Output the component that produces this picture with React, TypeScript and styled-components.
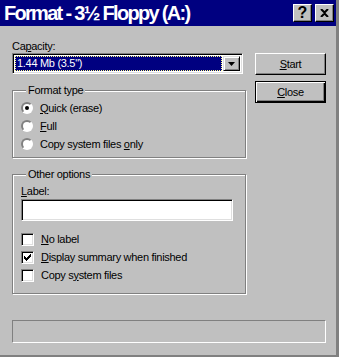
import styled, { createGlobalStyle } from 'styled-components';

const GlobalStyle = createGlobalStyle`
    html, body {
        margin: 0;
        padding: 0;
        background: #c0c0c0;
    }
    * {
        box-sizing: border-box;
    }
`

const Window = styled.div`
    width: 339px;
    height: 357px;
    display: flex;
    flex-direction: column;
    background: #c0c0c0;
    border-right: 3px solid #808080;
    border-bottom: 2px solid #808080;
    box-shadow: inset -1px -1px 0 #c0c0c0;
    font-family: "Liberation Sans", Arial, sans-serif;
    font-size: 11px;
    letter-spacing: -0.3px;
    color: #000;
`

const TitleBar = styled.div`
    height: 26px;
    background: #000080;
    display: flex;
    align-items: center;
    justify-content: space-between;
    padding: 0 2px 0 4px;
`

const TitleText = styled.div`
    color: #fff;
    font-weight: bold;
    font-size: 20px;
    letter-spacing: -1.7px;
    white-space: nowrap;
`

const TitleButtons = styled.div`
    display: flex;
    gap: 3px;
`

const TitleButton = styled.div`
    width: 19px;
    height: 18px;
    background: #c0c0c0;
    border: 1px solid;
    border-color: #fff #000 #000 #fff;
    box-shadow: inset -1px -1px 0 #808080;
    display: flex;
    align-items: center;
    justify-content: center;
    font-weight: bold;
    font-size: 16px;
    letter-spacing: 0;
    line-height: 1;
`

const Body = styled.div`
    display: flex;
    padding: 14px 0 0 12px;
`

const LeftColumn = styled.div`
    width: 234px;
    display: flex;
    flex-direction: column;
`

const RightColumn = styled.div`
    display: flex;
    flex-direction: column;
    gap: 6px;
    margin-left: 9px;
    padding-top: 13px;
`

const FieldLabel = styled.div`
    line-height: 13px;
    height: 13px;
`

const Combo = styled.div`
    width: 231px;
    height: 21px;
    display: flex;
    background: #fff;
    border: 1px solid;
    border-color: #808080 #fff #fff #808080;
    box-shadow: inset 1px 1px 0 #000, inset -1px -1px 0 #dfdfdf;
    padding: 2px;
`

const ComboValue = styled.div`
    flex: 1;
    background: #000080;
    color: #fff;
    line-height: 13px;
    padding: 1px 2px;
    outline: 1px dotted #ffff80;
    outline-offset: -1px;
    margin-right: 1px;
`

const DropButton = styled.div`
    width: 17px;
    background: #c0c0c0;
    border: 1px solid;
    border-color: #dfdfdf #000 #000 #dfdfdf;
    box-shadow: inset 1px 1px 0 #fff, inset -1px -1px 0 #808080;
    display: flex;
    align-items: center;
    justify-content: center;
`

const Group = styled.fieldset<{ top: number; pt: number; pb: number }>`
    margin: ${p => p.top}px 0 0 0;
    padding: ${p => p.pt}px 8px ${p => p.pb}px 8px;
    border: 1px solid #808080;
    box-shadow: inset 1px 1px 0 #fff, 1px 1px 0 #fff;
    min-width: 0;
`

const Legend = styled.legend`
    padding: 0 2px;
    margin-left: 5px;
    line-height: 13px;
    background: #c0c0c0;
`

const OptionRow = styled.div`
    height: 18px;
    display: flex;
    align-items: center;
    gap: 7px;
    line-height: 13px;
`

const Radio = styled.div<{ checked?: boolean }>`
    width: 12px;
    height: 12px;
    border-radius: 50%;
    background: #fff;
    border: 2px solid;
    border-color: #808080 #fff #fff #808080;
    display: flex;
    align-items: center;
    justify-content: center;
    &::after {
        content: '';
        width: 4px;
        height: 4px;
        border-radius: 50%;
        background: ${p => (p.checked ? '#000' : 'transparent')};
    }
`

const Check = styled.div`
    width: 13px;
    height: 13px;
    background: #fff;
    border: 1px solid;
    border-color: #808080 #fff #fff #808080;
    box-shadow: inset 1px 1px 0 #000, inset -1px -1px 0 #dfdfdf;
    display: flex;
    align-items: center;
    justify-content: center;
`

const TextInput = styled.div`
    width: 212px;
    height: 22px;
    margin-top: 1px;
    background: #fff;
    border: 1px solid;
    border-color: #808080 #fff #fff #808080;
    box-shadow: inset 1px 1px 0 #000, inset -1px -1px 0 #dfdfdf;
`

const CheckList = styled.div`
    margin-top: 9px;
    display: flex;
    flex-direction: column;
`

const Button = styled.div<{ isDefault?: boolean }>`
    width: 71px;
    height: 22px;
    display: flex;
    align-items: center;
    justify-content: center;
    background: #c0c0c0;
    border: 1px solid;
    border-color: ${p => (p.isDefault ? '#000' : '#fff #000 #000 #fff')};
    box-shadow: ${p =>
        p.isDefault
            ? 'inset 1px 1px 0 #fff, inset -1px -1px 0 #000, inset -2px -2px 0 #808080'
            : 'inset -1px -1px 0 #808080'};
    line-height: 13px;
`

const Progress = styled.div`
    margin: 26px 0 0 12px;
    width: 314px;
    height: 23px;
    border: 1px solid;
    border-color: #808080 #fff #fff #808080;
`

const Key = styled.span`
    text-decoration: underline;
`

function RadioOption({ label, checked }: { label: React.ReactNode; checked?: boolean }) {
    return (
        <OptionRow>
            <Radio checked={checked} />
            <span>{label}</span>
        </OptionRow>
    )
}

function CheckOption({ label, checked }: { label: React.ReactNode; checked?: boolean }) {
    return (
        <OptionRow>
            <Check>
                {checked && (
                    <svg width="7" height="7" viewBox="0 0 7 7">
                        <path d="M0 2h1v1h1v1h1v-1h1v-1h1v-1h1v-1h1v3h-1v1h-1v1h-1v1h-1v1h-1v-1h-1v-1h-1z" fill="#000" />
                    </svg>
                )}
            </Check>
            <span>{label}</span>
        </OptionRow>
    )
}

export default function App() {
    return (
        <>
            <GlobalStyle />
            <Window>
                <TitleBar>
                    <TitleText>Format - 3½ Floppy (A:)</TitleText>
                    <TitleButtons>
                        <TitleButton>?</TitleButton>
                        <TitleButton>
                            <svg width="9" height="8" viewBox="0 0 9 8">
                                <path d="M1 0L4.5 3.5L8 0M1 8L4.5 4.5L8 8" stroke="#000" strokeWidth="2" fill="none" />
                            </svg>
                        </TitleButton>
                    </TitleButtons>
                </TitleBar>
                <Body>
                    <LeftColumn>
                        <FieldLabel>Ca<Key>p</Key>acity:</FieldLabel>
                        <Combo>
                            <ComboValue>1.44 Mb (3.5")</ComboValue>
                            <DropButton>
                                <svg width="7" height="4" viewBox="0 0 7 4">
                                    <path d="M0 0h7L3.5 4z" fill="#000" />
                                </svg>
                            </DropButton>
                        </Combo>
                        <Group top={10} pt={2} pb={4}>
                            <Legend>Format type</Legend>
                            <RadioOption checked label={<><Key>Q</Key>uick (erase)</>} />
                            <RadioOption label={<><Key>F</Key>ull</>} />
                            <RadioOption label={<>Copy system files <Key>o</Key>nly</>} />
                        </Group>
                        <Group top={10} pt={4} pb={9}>
                            <Legend>Other options</Legend>
                            <FieldLabel><Key>L</Key>abel:</FieldLabel>
                            <TextInput />
                            <CheckList>
                                <CheckOption label={<><Key>N</Key>o label</>} />
                                <CheckOption checked label={<><Key>D</Key>isplay summary when finished</>} />
                                <CheckOption label={<>Copy s<Key>y</Key>stem files</>} />
                            </CheckList>
                        </Group>
                    </LeftColumn>
                    <RightColumn>
                        <Button><span><Key>S</Key>tart</span></Button>
                        <Button isDefault><span><Key>C</Key>lose</span></Button>
                    </RightColumn>
                </Body>
                <Progress />
            </Window>
        </>
    )
}
